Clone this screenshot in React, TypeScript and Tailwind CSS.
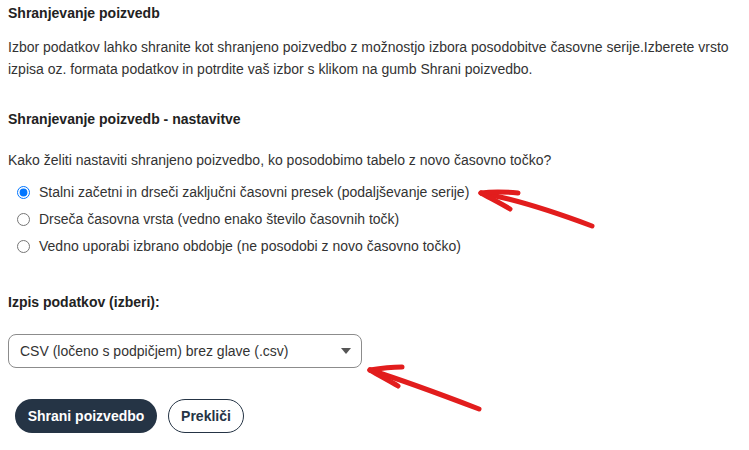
const options = [
  "Stalni začetni in drseči zaključni časovni presek (podaljševanje serije)",
  "Drseča časovna vrsta (vedno enako število časovnih točk)",
  "Vedno uporabi izbrano obdobje (ne posodobi z novo časovno točko)",
]

function Arrows() {
  return (
    <svg className="absolute left-0 top-0 pointer-events-none" width="749" height="450" viewBox="0 0 749 450">
      <g fill="none" stroke="#e21d1d" strokeWidth="5" strokeLinecap="round" strokeLinejoin="round">
        <path d="M592 226 C560 214 520 200 481 193" />
        <path d="M481 193 C495 191 508 192 518 193" />
        <path d="M481 193 C492 199 502 204 510 209" />
        <path d="M479 409 C445 396 405 381 370 370" />
        <path d="M370 370 C382 368 392 367 402 367" />
        <path d="M370 370 C380 376 390 381 398 386" />
      </g>
    </svg>
  )
}

export default function App() {
  return (
    <div className="relative w-[749px] h-[450px] bg-white overflow-hidden font-['Liberation_Sans',Arial,sans-serif] text-[#333]">
      <div className="px-2 pt-[3px]">
        <h2 className="text-[14px] leading-[20px] font-bold text-[#222]">Shranjevanje poizvedb</h2>
        <p className="mt-[13px] text-[14px] leading-[22px] w-[730px]">
          Izbor podatkov lahko shranite kot shranjeno poizvedbo z možnostjo izbora posodobitve časovne serije.Izberete vrsto
          izpisa oz. formata podatkov in potrdite vaš izbor s klikom na gumb Shrani poizvedbo.
        </p>
        <h2 className="mt-[29px] text-[14px] leading-[20px] font-bold text-[#222]">Shranjevanje poizvedb - nastavitve</h2>
        <p className="mt-[21px] text-[14px] leading-[20px]">
          Kako želiti nastaviti shranjeno poizvedbo, ko posodobimo tabelo z novo časovno točko?
        </p>
        <div className="mt-[9px] flex flex-col">
          {options.map((o, i) => (
            <label key={o} className="h-[27px] flex items-center gap-[9px] pl-[9px] text-[14px]">
              <input type="radio" name="opt" defaultChecked={i === 0} className="m-0 w-[13px] h-[13px] accent-[#0075ff]" />
              <span>{o}</span>
            </label>
          ))}
        </div>
        <h2 className="mt-[32px] text-[14px] leading-[20px] font-bold text-[#222]">Izpis podatkov (izberi):</h2>
        <div className="mt-[22px] w-[354px] h-[34px] border border-[#8c8c8c] rounded-[8px] flex items-center justify-between pl-[11px] pr-[10px] text-[14px]">
          <span>CSV (ločeno s podpičjem) brez glave (.csv)</span>
          <svg width="10" height="6" viewBox="0 0 10 6">
            <path d="M0 0 H10 L5 6 Z" fill="#555" />
          </svg>
        </div>
        <div className="mt-[31px] ml-[7px] flex gap-[11px]">
          <button className="h-[34px] w-[142px] rounded-full bg-[#253445] text-white text-[14px] font-bold">
            Shrani poizvedbo
          </button>
          <button className="h-[34px] w-[76px] rounded-full border border-[#253445] bg-white text-[#253445] text-[14px] font-bold">
            Prekliči
          </button>
        </div>
      </div>
      <Arrows />
    </div>
  )
}
